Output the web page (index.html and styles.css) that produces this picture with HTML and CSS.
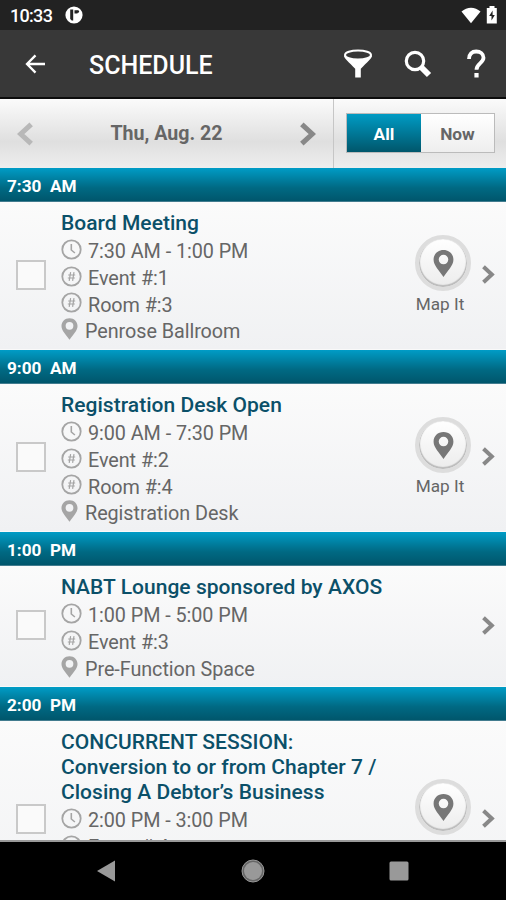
FILE: index.html
```html
<!DOCTYPE html>
<html lang="en">
<head>
<meta charset="utf-8">
<title>Schedule</title>
<link rel="stylesheet" href="styles.css">
</head>
<body>
<svg class="defs" width="0" height="0" aria-hidden="true">
  <symbol id="clock" viewBox="0 0 21 21"><circle cx="10.5" cy="10.5" r="9.2" fill="none" stroke="#a5a5a5" stroke-width="1.8"/><path d="M10.3 5v6l3.6 3" fill="none" stroke="#a5a5a5" stroke-width="1.6"/></symbol>
  <symbol id="hash" viewBox="0 0 21 21"><circle cx="10.5" cy="10.5" r="9.2" fill="none" stroke="#a5a5a5" stroke-width="1.8"/><path d="M9.6 6.2 8.2 14.8M13 6.2l-1.4 8.6M7.2 9h7M6.800 12h7" fill="none" stroke="#a5a5a5" stroke-width="1.2"/></symbol>
  <symbol id="pin" viewBox="0 0 18 23"><path fill-rule="evenodd" d="M9 0C4 0 .5 3.6.5 8.2c0 5 5 9.3 8.5 14.8 3.500-5.500 8.500-9.800 8.500-14.800C17.500 3.600 14 0 9 0zM9 4a4.100 4.100 0 1 1 0 8.200A4.100 4.100 0 0 1 9 4z" fill="currentColor"/></symbol>
  <symbol id="chevron" viewBox="0 0 13 19"><path d="M2 1.800 10.300 9.500 2 17.200" fill="none" stroke="currentColor" stroke-width="4"/></symbol>
</svg>
<div class="screen">
  <div class="status">
    <span class="clock">10:33</span>
    <svg class="app" width="18" height="18" viewBox="0 0 18 18"><circle cx="9" cy="9" r="8.600" fill="#fff"/><path d="M5.200 3.500h3v11h-1.500l-1.500-1.500zM9.500 4.200h3v3.200h-3z" fill="#222"/><circle cx="12.800" cy="5.600" r="1.300" fill="#222"/></svg>
    <svg class="wifi" width="20" height="17" viewBox="0 0 20 17"><path d="M.5 4.500C6-.6 14-.6 19.500 4.500L10 16.200z" fill="#fff"/></svg>
    <svg class="battery" width="12" height="18" viewBox="0 0 12 18"><path d="M3.500 0h5v2h2.300v15.500H.8V2h2.700z" fill="#fff"/><path d="M6.600 4.500 3.200 10h2.300v4.500L8.800 9H6.600z" fill="#222"/></svg>
  </div>
  <header class="header">
    <svg class="back" width="21" height="20" viewBox="0 0 21 20"><path d="M20 10H2.500M10.500 1.400 2 10l8.500 8.600" fill="none" stroke="#fff" stroke-width="2.300"/></svg>
    <h1>SCHEDULE</h1>
    <svg class="funnel" width="30" height="30" viewBox="0 0 30 30"><path d="M1 6.500h28c0 3-5 6.500-11.200 13.300V28.500h-5.600v-8.700C6 13 1 9.500 1 6.500z" fill="#fff"/><ellipse cx="15" cy="6" rx="13" ry="4.500" fill="#383838" stroke="#fff" stroke-width="2"/></svg>
    <svg class="search" width="28" height="28" viewBox="0 0 28 28"><circle cx="11" cy="11" r="8.700" fill="none" stroke="#fff" stroke-width="3.200"/><path d="m17 17 8 8" stroke="#fff" stroke-width="6"/></svg>
    <svg class="help" width="20" height="30" viewBox="0 0 20 30"><path d="M3 10C3 5 6 2.500 10.200 2.500S17.500 5 17.500 8.800c0 5.200-7 5.500-7 12" fill="none" stroke="#fff" stroke-width="3.800"/><path d="M8.400 24h4.200v4.500H8.400z" fill="#fff"/></svg>
  </header>
  <div class="toolbar">
    <div class="day">
      <svg class="prev" width="17" height="24"><use href="#chevron"/></svg>
      <span>Thu, Aug. 22</span>
      <svg class="next" width="17" height="24"><use href="#chevron"/></svg>
    </div>
    <div class="switch"><span class="on">All</span><span class="off">Now</span></div>
  </div>
  <main class="list">
    <h2 class="slot">7:30&nbsp; AM</h2>
    <article class="event">
      <i class="check"></i>
      <div class="info">
        <h3>Board Meeting</h3>
        <p><svg class="round"><use href="#clock"/></svg>7:30 AM - 1:00 PM</p>
        <p><svg class="round"><use href="#hash"/></svg>Event #:1</p>
        <p><svg class="round"><use href="#hash"/></svg>Room #:3</p>
        <p><svg class="pin"><use href="#pin"/></svg>Penrose Ballroom</p>
      </div>
      <div class="map"><div class="disc"><svg><use href="#pin"/></svg></div><span>Map It</span></div>
      <svg class="go"><use href="#chevron"/></svg>
    </article>
    <h2 class="slot">9:00&nbsp; AM</h2>
    <article class="event">
      <i class="check"></i>
      <div class="info">
        <h3>Registration Desk Open</h3>
        <p><svg class="round"><use href="#clock"/></svg>9:00 AM - 7:30 PM</p>
        <p><svg class="round"><use href="#hash"/></svg>Event #:2</p>
        <p><svg class="round"><use href="#hash"/></svg>Room #:4</p>
        <p><svg class="pin"><use href="#pin"/></svg>Registration Desk</p>
      </div>
      <div class="map"><div class="disc"><svg><use href="#pin"/></svg></div><span>Map It</span></div>
      <svg class="go"><use href="#chevron"/></svg>
    </article>
    <h2 class="slot">1:00&nbsp; PM</h2>
    <article class="event short">
      <i class="check"></i>
      <div class="info">
        <h3>NABT Lounge sponsored by AXOS</h3>
        <p><svg class="round"><use href="#clock"/></svg>1:00 PM - 5:00 PM</p>
        <p><svg class="round"><use href="#hash"/></svg>Event #:3</p>
        <p><svg class="pin"><use href="#pin"/></svg>Pre-Function Space</p>
      </div>
      <svg class="go"><use href="#chevron"/></svg>
    </article>
    <h2 class="slot">2:00&nbsp; PM</h2>
    <article class="event tall">
      <i class="check"></i>
      <div class="info">
        <h3>CONCURRENT SESSION:<br>Conversion to or from Chapter 7 /<br>Closing A Debtor’s Business</h3>
        <p><svg class="round"><use href="#clock"/></svg>2:00 PM - 3:00 PM</p>
        <p><svg class="round"><use href="#hash"/></svg>Event #:4</p>
      </div>
      <div class="map"><div class="disc"><svg><use href="#pin"/></svg></div></div>
      <svg class="go"><use href="#chevron"/></svg>
    </article>
  </main>
  <nav class="nav">
    <svg width="20" height="22" viewBox="0 0 20 22"><path d="M19 .5v21L1 11z" fill="#999"/></svg>
    <svg width="24" height="24" viewBox="0 0 24 24"><circle cx="12" cy="12" r="11" fill="#666" stroke="#999" stroke-width="1"/><circle cx="12" cy="12" r="9" fill="#999"/></svg>
    <svg width="20" height="20" viewBox="0 0 20 20"><rect x=".5" y=".5" width="19" height="19" rx="1.500" fill="#999"/></svg>
  </nav>
</div>
</body>
</html>
```
FILE: styles.css
```css
* { box-sizing: border-box; margin: 0; padding: 0; }
body { width: 506px; height: 900px; overflow: hidden; font-family: Roboto, "Liberation Sans", sans-serif; background: #000; }
.defs { display: none; }
svg { display: block; flex: none; }
.screen { display: flex; flex-direction: column; width: 506px; height: 900px; }

.status { flex: none; display: flex; align-items: center; height: 30px; padding: 0 8px 0 10px; background: #222; color: #fff; }
.clock { width: 55px; font-size: 18px; font-weight: 500; line-height: 30px; padding-top: 2px; letter-spacing: -.7px; white-space: nowrap; }
.wifi { margin-left: auto; margin-right: 5px; }

.header { flex: none; display: flex; align-items: center; height: 69px; padding: 1px 20px 0 25px; background: #383838; border-bottom: 2px solid #0c0c0c; color: #fff; }
.header h1 { width: 254px; margin-left: 43px; font-size: 25px; font-weight: 500; line-height: 30px; letter-spacing: 0; padding-top: 3px; }
.search { margin-left: 31px; }
.help { margin-left: 34px; }

.toolbar { flex: none; display: flex; height: 69px; background: linear-gradient(#fbfbfb, #dfdfdf 62%, #eee); }
.day { display: flex; align-items: center; justify-content: space-between; width: 334px; padding: 0 17px 0 17px; border-right: 1px solid #c6c6c6; color: #666; font-size: 19.6px; font-weight: 700; }
.day .prev { transform: scaleX(-1); color: #b8b8b8; }
.day .next { color: #888; }
.switch { display: flex; width: 149px; height: 40px; margin: 14px 0 0 12px; border: 1px solid #bbb; font-size: 17.3px; font-weight: 700; line-height: 40px; text-align: center; }
.on { width: 74px; background: linear-gradient(#009bc4, #00566b); color: #fff; }
.off { flex: 1; background: linear-gradient(#fff, #eee); color: #666; }

.list { flex: none; height: 674px; overflow: hidden; background: #f8f8f8; border-bottom: 2px solid #999; }
.slot { height: 34px; padding-left: 7px; background: linear-gradient(#009cc6, #006983 60%, #00566c); border-bottom: 1px solid #427c8f; color: #fff; font-size: 17.2px; font-weight: 700; line-height: 36px; }
.event { display: flex; align-items: center; height: 148px; padding: 0 11px 0 16px; background: linear-gradient(#fbfbfb, #f0f1f3); border-bottom: 1px solid #f9f9f9; }
.short { height: 121px; }
.tall { height: 198px; }
.check { flex: none; width: 30px; height: 30px; margin-top: -2px; border: 2px solid #c9c9c9; background: #fafafa; }
.info { align-self: flex-start; flex: 1; padding: 9px 0 0 15px; }
.info h3 { margin-bottom: 1.500px; color: #0b5069; font-size: 21px; font-weight: 500; line-height: 25px; letter-spacing: .03px; white-space: nowrap; }
.info p { display: flex; align-items: center; height: 26.7px; padding-top: 2px; color: #666; font-size: 19.8px; font-weight: 400; letter-spacing: -.06px; white-space: nowrap; }
.round { width: 21px; height: 21px; margin: -5px 6px 0 0; }
.pin { width: 17px; height: 22px; margin: -5px 7px 0 0; color: #a5a5a5; }
.map { flex: none; width: 56px; height: 82px; margin: 1px 10px 0 0; color: #666; font-size: 17.2px; line-height: 26px; text-align: center; white-space: nowrap; }
.map span { display: block; margin: 0 -4px 0 -10px; }
.disc { display: flex; align-items: center; justify-content: center; width: 56px; height: 56px; border: 4px solid #ddd; border-radius: 50%; background: linear-gradient(#fff, #ececec); box-shadow: inset 0 -1px 1px 1px #bbb; }
.disc svg { width: 21px; height: 27px; color: #777; }
.go { width: 14px; height: 19px; margin-top: -2px; color: #888; }

.nav { flex: 1; display: flex; align-items: center; justify-content: space-between; padding: 0 97px 0 96px; background: #000; }
```
